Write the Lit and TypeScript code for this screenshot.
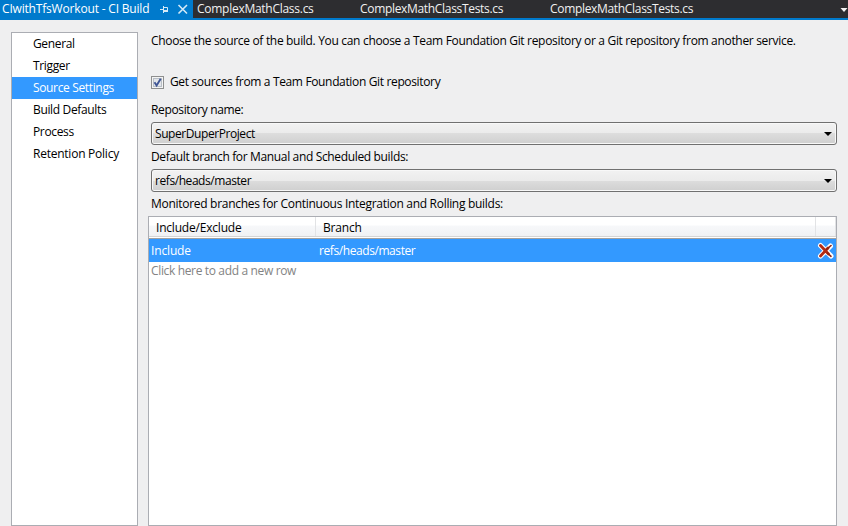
import { LitElement, html, css, svg } from "lit";
import { customElement, property } from "lit/decorators.js";

const textBase = css`
  :host { box-sizing: border-box; font: 12px/16px "Open Sans", "Noto Sans", sans-serif; color: #000; letter-spacing: -0.35px; }
  * { box-sizing: border-box; }
`;

@customElement("tab-strip")
class TabStrip extends LitElement {
  static styles = [textBase, css`
    :host { display: flex; height: 20px; background: #2d2d30; border-bottom: 2px solid #007acc; color: #f1f1f1; white-space: nowrap; letter-spacing: -0.32px; }
    .tab { height: 18px; line-height: 18px; padding-left: 4px; flex: none; }
    .active { width: 193px; height: 20px; background: #007acc; padding-left: 2px; display: flex; color: #fff; letter-spacing: -0.18px; }
    .title { width: 157px; }
    .first { width: 163px; letter-spacing: -0.27px; }
    .second { width: 190px; }
    .menu { margin-left: auto; width: 9px; height: 18px; }
    svg { display: block; }
  `];
  render() {
    return html`
      <div class="tab active">
        <span class="title">CIwithTfsWorkout - CI Build</span>
        <svg width="34" height="18" viewBox="0 0 34 18" fill="none" stroke="#d5eaf7">
          ${svg`<path d="M1 9.5H4M4.5 6V13M5 7.5H8.5V11M5 10.5H9M5 11.5H9"/><path stroke-width="1.6" d="M19.5 5L28 13.5M28 5L19.5 13.5"/>`}
        </svg>
      </div>
      <div class="tab first">ComplexMathClass.cs</div>
      <div class="tab second">ComplexMathClassTests.cs</div>
      <div class="tab">ComplexMathClassTests.cs</div>
      <svg class="menu" viewBox="0 0 9 18"><path fill="#f1f1f1" d="M1.5 8H8.5L5 12Z"/></svg>
    `;
  }
}

@customElement("side-nav")
class SideNav extends LitElement {
  static styles = [textBase, css`
    :host { display: block; width: 127px; background: #fff; border: 1px solid #abadb3; flex: none; }
    .item { height: 22px; line-height: 22px; padding-left: 21px; white-space: nowrap; }
    .item:last-child { letter-spacing: -0.24px; }
    .selected { background: #3399ff; color: #fff; }
  `];
  render() {
    return ["General", "Trigger", "Source Settings", "Build Defaults", "Process", "Retention Policy"].map(
      (name) => html`<div class="item ${name === "Source Settings" ? "selected" : ""}">${name}</div>`
    );
  }
}

@customElement("combo-box")
class ComboBox extends LitElement {
  @property() value = "";
  static styles = [textBase, css`
    :host { display: flex; align-items: center; justify-content: space-between; height: 23px; padding: 0 4px 0 3px;
      border: 1px solid #707070; border-radius: 3px; box-shadow: inset 0 0 0 1px #f8f8f8; letter-spacing: -0.43px;
      background: linear-gradient(#f2f2f2 0, #ebebeb 50%, #dddddd 50%, #cfcfcf 100%); }
    svg { display: block; }
  `];
  render() {
    return html`<span>${this.value}</span>
      <svg width="8" height="5" viewBox="0 0 8 5"><path d="M0 1H8L4 5Z"/></svg>`;
  }
}

@customElement("branch-grid")
class BranchGrid extends LitElement {
  static styles = [textBase, css`
    :host { display: block; border: 1px solid #abadb3; background: #fff; }
    .row { display: grid; grid-template-columns: 167px 1fr 20px; }
    .head { height: 22px; line-height: 20px; letter-spacing: -0.2px; border-bottom: 1px solid #a0a0a0; background: linear-gradient(#fff 0, #fff 40%, #f7f8fa 41%, #f1f2f4 90%, #d5d5d5 91%, #d5d5d5 95%, #fff 96%); }
    .cell { padding-left: 7px; height: 19px; border-right: 1px solid #e2e3e5; line-height: 21px; }
    .data { height: 23px; line-height: 24px; background: #3399ff; color: #fff; }
    .data span { padding-left: 3px; letter-spacing: -0.42px; }
    .data span:first-child { padding-left: 2px; letter-spacing: -0.15px; }
    .hint { padding: 1px 0 0 2px; color: #838383; }
    svg { display: block; margin-top: 3px; }
  `];
  render() {
    return html`
      <div class="row head"><div class="cell">Include/Exclude</div><div class="cell">Branch</div><div class="cell"></div></div>
      <div class="row data">
        <span>Include</span><span>refs/heads/master</span>
        <svg width="18" height="18" viewBox="0 0 18 18" fill="none" stroke-linecap="round">
          <path stroke="#fff" stroke-width="5" d="M4.5 3.5L15 14M14.5 4L4.5 14"/>
          <path stroke="#b32a14" stroke-width="2.8" d="M4.5 3.5L12.5 12M12 6L4.5 14"/>
          <path stroke="#8d2414" stroke-width="1.6" d="M11.5 11L15 14.3M10.5 7.5L15 3.5"/>
        </svg>
      </div>
      <div class="hint">Click here to add a new row</div>
    `;
  }
}

@customElement("app-root")
class AppRoot extends LitElement {
  static styles = [textBase, css`
    :host { display: flex; flex-direction: column; width: 848px; height: 526px; background: #efeff0; overflow: hidden; }
    .body { flex: 1; display: flex; gap: 10px; padding: 12px 11px 0; }
    .main { flex: 1; display: flex; flex-direction: column; white-space: nowrap; }
    .intro { margin: 1px 0 0 3px; letter-spacing: -0.32px; }
    .check { display: flex; align-items: center; gap: 6px; margin: 25px 0 0 3px; height: 16px; }
    .label { height: 16px; margin: 4px 0 4px 3px; }
    .repo { margin-top: 12px; }
    .monitored { letter-spacing: -0.29px; }
    combo-box { margin-left: 3px; flex: none; }
    branch-grid { flex: 1; }
    svg { display: block; }
  `];
  render() {
    return html`
      <tab-strip></tab-strip>
      <div class="body">
        <side-nav></side-nav>
        <div class="main">
          <div class="intro">Choose the source of the build. You can choose a Team Foundation Git repository or a Git repository from another service.</div>
          <div class="check">
            <svg width="13" height="13" viewBox="0 0 13 13">
              <rect x=".5" y=".5" width="12" height="12" fill="#f4f4f4" stroke="#8e8f8f"/>
              <rect x="2.5" y="2.5" width="8" height="8" fill="#e3e6ea" stroke="#b8bec6"/>
              <path d="M3.5 6.2L5.6 9.5L9.7 2.7" fill="none" stroke="#405695" stroke-width="1.9"/>
            </svg>
            <span>Get sources from a Team Foundation Git repository</span>
          </div>
          <div class="label repo">Repository name:</div>
          <combo-box value="SuperDuperProject"></combo-box>
          <div class="label">Default branch for Manual and Scheduled builds:</div>
          <combo-box value="refs/heads/master"></combo-box>
          <div class="label monitored">Monitored branches for Continuous Integration and Rolling builds:</div>
          <branch-grid></branch-grid>
        </div>
      </div>
    `;
  }
}
